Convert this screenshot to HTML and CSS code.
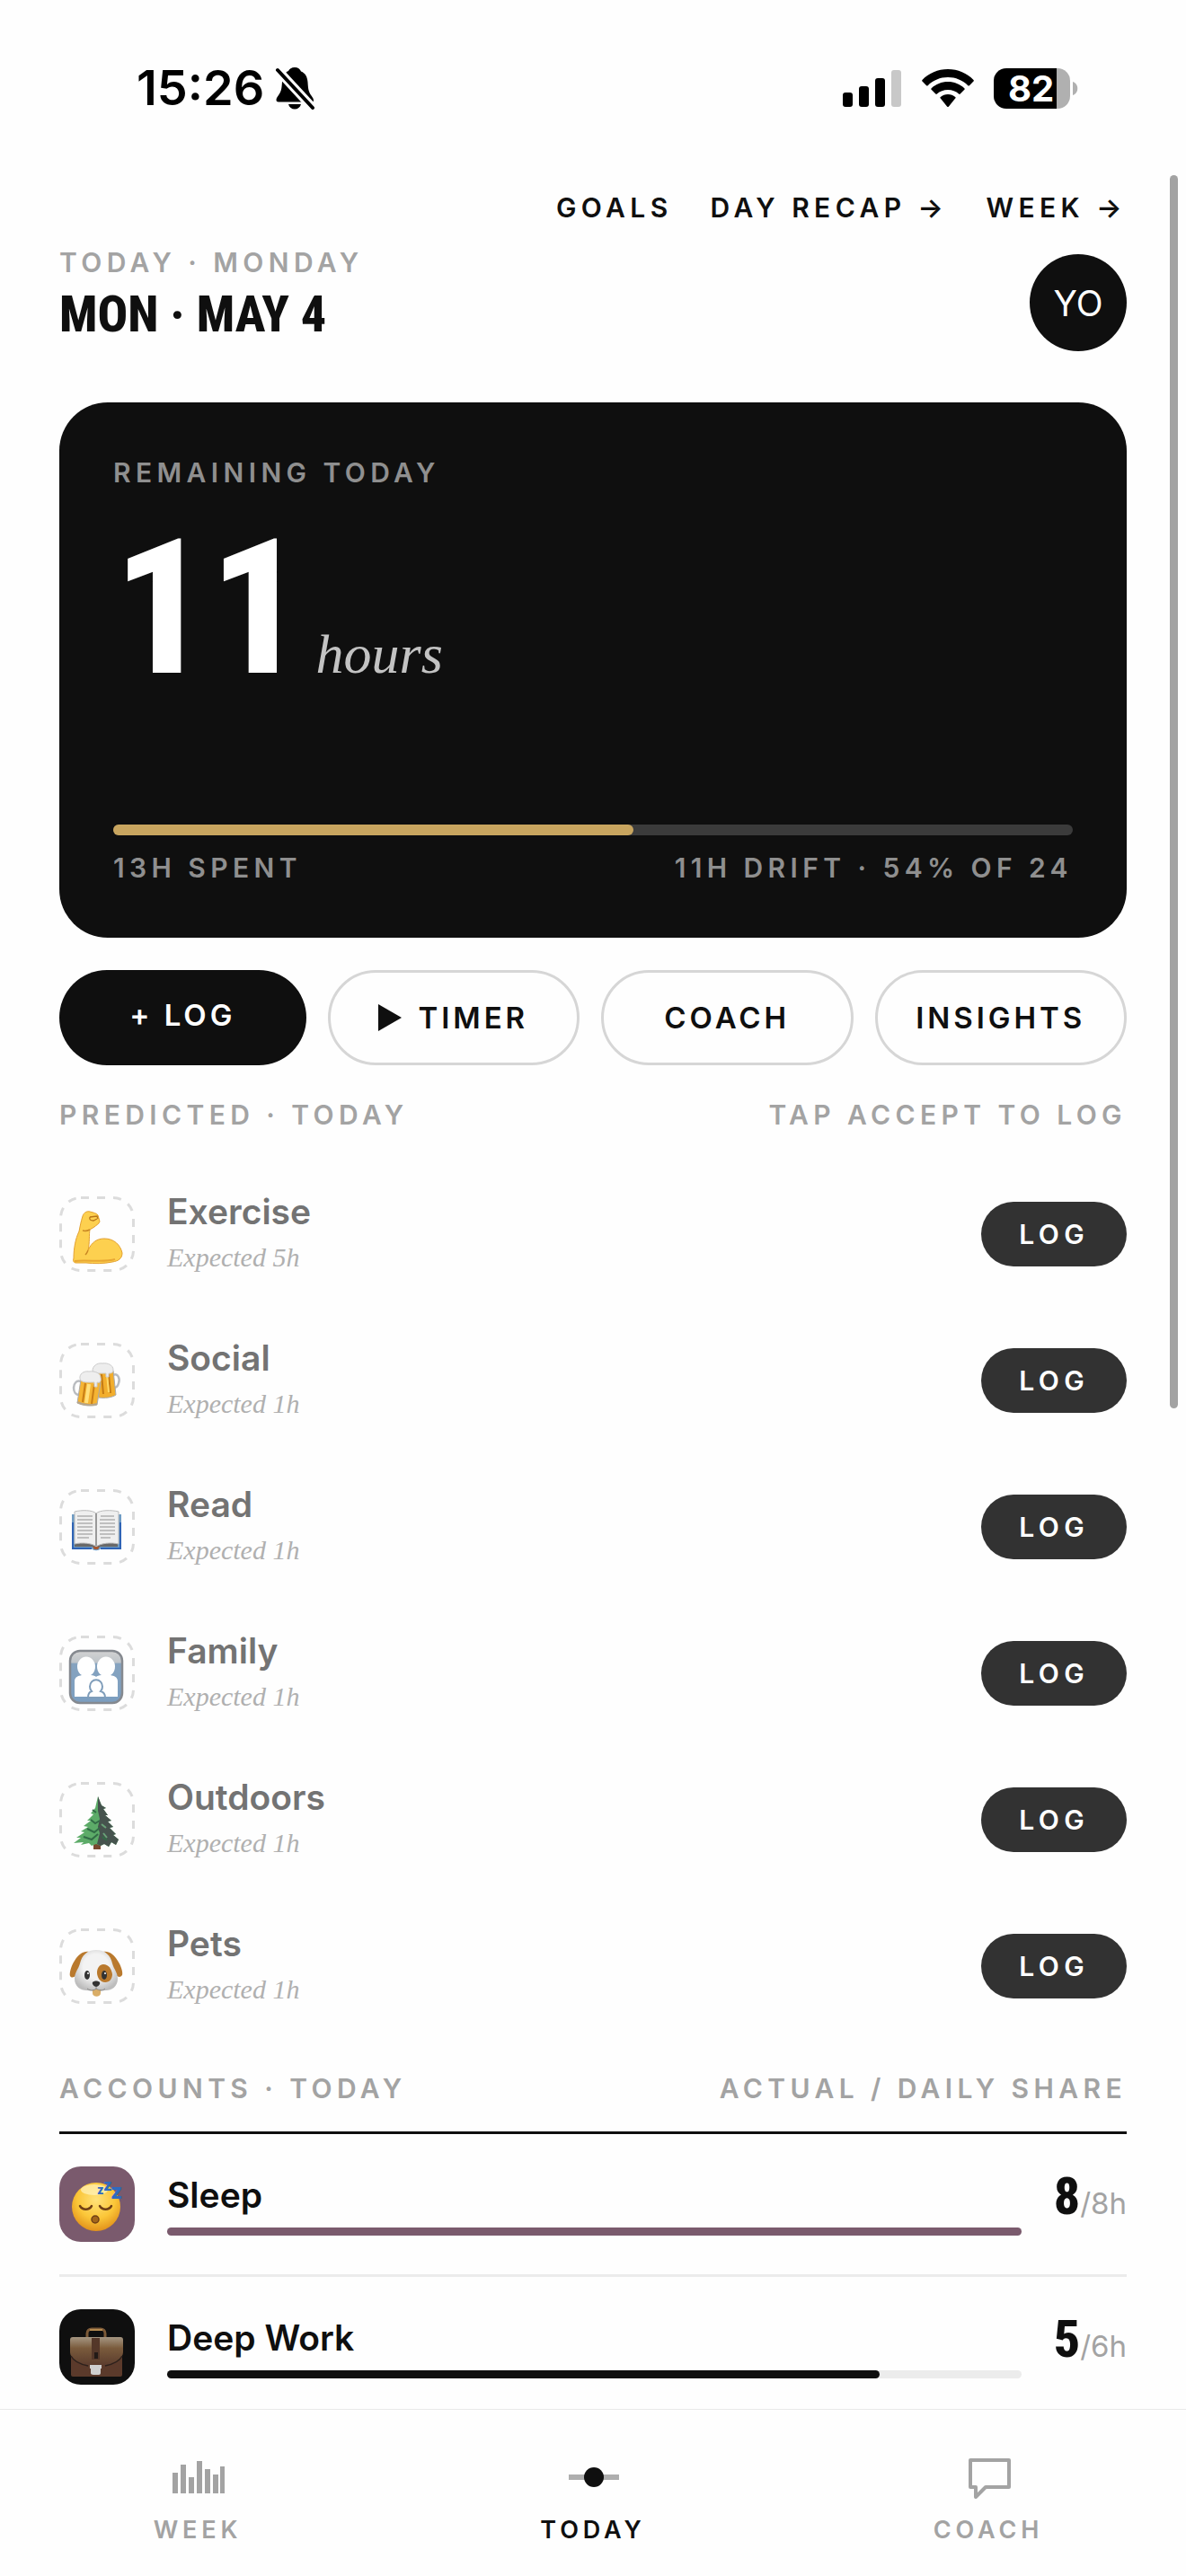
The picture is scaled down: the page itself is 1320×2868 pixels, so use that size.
FILE: index.html
```html
<!DOCTYPE html>
<html lang="en">
<head>
<meta charset="utf-8">
<meta name="viewport" content="width=device-width, initial-scale=1">
<title>Today</title>
<link rel="stylesheet" href="styles.css">
</head>
<body>
<div class="app">
  <div class="status">
    <div class="status-side">
      <span class="clock">15:26</span>
      <svg class="bell" width="44" height="48" viewBox="0 0 44 48" aria-label="Silent">
        <path d="M22 1c3.600 0 6 2 7 4.500 5 2 7 6 7.500 12 .5 8 1 11 4 15 1.500 2 2.500 3.500 2.500 5.500 0 1-.8 1.500-2 1.500H4c-1.500 0-2.500-.8-2.500-2 0-2 1-3.500 2.500-5.500 3-4 3.500-7 4-15 .5-6 2.500-10 7-12C16 3 18.400 1 22 1z"/>
        <path d="M15 42h14c-1 3.600-3.600 5.500-7 5.500s-6-1.900-7-5.500z"/>
        <path d="M3 4l39 42" stroke="#fefefe" stroke-width="10"/>
        <path d="M3 4l39 42" stroke="#000" stroke-width="4" stroke-linecap="round"/>
      </svg>
    </div>
    <div class="status-side status-right">
      <svg width="66" height="42" viewBox="0 0 66 42" aria-label="Signal">
        <rect x="0" y="26" width="11" height="16" rx="3"/><rect x="18" y="19" width="11" height="23" rx="3"/><rect x="36" y="10" width="11" height="32" rx="3"/><rect x="54" y="1" width="11" height="41" rx="3" fill="#c8c8c8"/>
      </svg>
      <svg width="58" height="42" viewBox="0 0 58 42" aria-label="Wi-Fi">
        <path d="M29 0C18 0 7.500 4.500.5 12c-.5.6-.5 1 0 1.600l4.600 4.600c.6.600 1.100.5 1.600 0C12.500 12.300 20.500 9 29 9s16.500 3.300 22.300 9.200c.5.5 1 .6 1.600 0l4.600-4.600c.5-.6.5-1 0-1.600C50.500 4.500 40 0 29 0z"/>
        <path d="M29 14c-7 0-13.500 2.700-18.300 7.200-.6.600-.6 1.100-.1 1.600l4.700 4.700c.5.500 1 .5 1.600 0C20.100 24.500 24.300 23 29 23s8.900 1.500 12.100 4.500c.6.500 1.100.5 1.600 0l4.700-4.700c.5-.5.5-1-.1-1.600C42.500 16.700 36 14 29 14z"/>
        <path d="M29 28c-3.200 0-6 1.100-8.200 3-.6.500-.5 1.100 0 1.600l7.200 8.800c.7.700 1.300.7 2 0l7.200-8.800c.5-.5.600-1.100 0-1.600-2.200-1.900-5-3-8.200-3z"/>
      </svg>
      <svg width="94" height="45" viewBox="0 0 94 45" aria-label="Battery">
        <path d="M70 0h1a14 14 0 0 1 14 14v17a14 14 0 0 1-14 14h-1z" fill="#b0b0b0"/>
        <path d="M70 0v45H14A14 14 0 0 1 0 31V14A14 14 0 0 1 14 0z"/>
        <path d="M88 15c7 2 7 13 0 15z" fill="#b0b0b0"/>
        <text x="16" y="37" class="battery-text">82</text>
      </svg>
    </div>
  </div>

  <main class="main">
    <nav class="links">
      <a href="#goals">GOALS</a>
      <a href="#recap">DAY RECAP →</a>
      <a href="#week">WEEK →</a>
    </nav>
    <header class="head">
      <div>
        <p class="label">TODAY · MONDAY</p>
        <h1 class="title">MON · MAY 4</h1>
      </div>
      <button class="avatar" type="button">YO</button>
    </header>

    <section class="card">
      <p class="label">REMAINING TODAY</p>
      <p class="total"><span class="total-num">11</span><em class="total-unit">hours</em></p>
      <div class="card-track"><div class="card-fill" style="width:54.2%"></div></div>
      <div class="split"><span class="label">13H SPENT</span><span class="label">11H DRIFT · 54% OF 24</span></div>
    </section>

    <div class="actions">
      <button class="action action-main" type="button">+ LOG</button>
      <button class="action" type="button"><svg width="26" height="30" viewBox="0 0 26 30" aria-hidden="true"><path d="M0 0l26 15L0 30z" fill="#0f0f0f"/></svg>TIMER</button>
      <button class="action" type="button">COACH</button>
      <button class="action" type="button">INSIGHTS</button>
    </div>

    <section>
      <div class="split section-head"><h2 class="label">PREDICTED · TODAY</h2><span class="label">TAP ACCEPT TO LOG</span></div>
      <ul class="list">
        <li class="row">
          <span class="tile"><svg viewBox="0 0 84 84" aria-hidden="true">
            <rect class="dash" x="1.500" y="1.500" width="81" height="81" rx="22.500"/>
            <path d="M26 22C27 18 31 16 34 17C38 18 42 19 43 21L45 28C44 31 41 32 39 34L34 37C33 42 34 52 32 60C36 51 42 47 50 47C61 47 68 54 70 63C70 69 66 72 59 73C50 75 38 75 30 74L19 74C16 74 15 72 16 69C16 58 18 47 22 39C23 34 24 28 26 22z" fill="#fdd04f" stroke="#e3a02e" stroke-width="1"/>
            <path d="M17 72C30 70 50 74 62 70" fill="none" stroke="#e8a733" stroke-width="2"/><path d="M32 60c-1 2-1 3-3 5M26 38c3 1 6 0 8-1" fill="none" stroke="#c98724" stroke-width="1.500"/><path d="M34 23l8-1 1 3M34 23c-1 3 1 4 4 4l4-2" fill="none" stroke="#b87418" stroke-width="1.300"/>
          </svg></span>
          <div class="row-body"><h3 class="name">Exercise</h3><p class="hint">Expected 5h</p></div>
          <button class="log" type="button">LOG</button>
        </li>
        <li class="row">
          <span class="tile"><svg viewBox="0 0 84 84" aria-hidden="true">
            <rect class="dash" x="1.500" y="1.500" width="81" height="81" rx="22.500"/>
            <path d="M60 36c5-3 8 4 6 9-1 4-3 5-5 5" fill="none" stroke="#b9bcc0" stroke-width="2.500"/>
            <path d="M38 32l22-1 3 27c-4 3-13 4-19 3z" fill="#f2ae2d" stroke="#aaa" stroke-width="1"/><path d="M47 35l2 22M55 35l2 21" stroke="#c47a14" stroke-width="2"/><path d="M53 35l2 20" stroke="#ffd968" stroke-width="2"/>
            <path d="M37 31c0-5 5-9 11-8 6-1 12 2 12 7 0 4-3 4-5 4v4h-3v-4H39z" fill="#ededed" stroke="#ccc" stroke-width="1"/>
            <path d="M24 43c-5-2-8 3-8 7s2 8 6 8" fill="none" stroke="#b9bcc0" stroke-width="2.500"/>
            <path d="M24 41l22 3-4 25c-6 2-16 1-22-2z" fill="#f5b433" stroke="#aaa" stroke-width="1"/><path d="M29 45l-3 21M39 46l-3 22" stroke="#c97e16" stroke-width="2"/><path d="M33 46l-3 21" stroke="#ffe07d" stroke-width="4"/><path d="M20 66c6 3 15 4 22 2" fill="none" stroke="#b5a58c" stroke-width="2"/>
            <path d="M23 40c-1-5 4-9 10-8 7-1 13 2 13 7 1 4-1 6-4 5v5h-3v-5c-6 0-15 1-16-4z" fill="#eee" stroke="#ccc" stroke-width="1"/>
          </svg></span>
          <div class="row-body"><h3 class="name">Social</h3><p class="hint">Expected 1h</p></div>
          <button class="log" type="button">LOG</button>
        </li>
        <li class="row">
          <span class="tile"><svg viewBox="0 0 84 84" aria-hidden="true">
            <rect class="dash" x="1.500" y="1.500" width="81" height="81" rx="22.500"/>
            <path d="M14 28h55v38H46c-2 3-8 3-10 0H14z" fill="#6f9cc4"/><path d="M15 37v29h21M68 37v29H46" fill="none" stroke="#2f63b5" stroke-width="2"/>
            <path d="M17 60h48v4H17z" fill="#686868"/>
            <path d="M17 25c8-2 20-2 24 2 4-4 17-4 25-2v36c-8-2-20-1-25 3-4-4-16-5-24-3z" fill="#efefef" stroke="#bbb" stroke-width="1"/>
            <path d="M41 27v36" stroke="#999" stroke-width="2"/>
            <path d="M20 30h17M20 34h17M20 38h17M20 42h17M20 46h17M20 50h17M20 54h13M46 30h15M45 34h17M45 38h17M45 42h17M45 46h17M45 50h17M46 54h11" stroke="#b0b0b0" stroke-width="1.300"/>
            <path d="M37 64h8l-2 3h-4z" fill="#a5572f"/>
          </svg></span>
          <div class="row-body"><h3 class="name">Read</h3><p class="hint">Expected 1h</p></div>
          <button class="log" type="button">LOG</button>
        </li>
        <li class="row">
          <span class="tile"><svg viewBox="0 0 84 84" aria-hidden="true">
            <defs><linearGradient id="family-sky" x2="0" y2="1"><stop offset="0" stop-color="#d2d2d2"/><stop offset=".22" stop-color="#bfc5ca"/><stop offset=".25" stop-color="#86a3bf"/><stop offset="1" stop-color="#7b9ec0"/></linearGradient></defs>
            <rect class="dash" x="1.500" y="1.500" width="81" height="81" rx="22.500"/>
            <rect x="12" y="17" width="58" height="58" rx="11" fill="url(#family-sky)" stroke="#85898f" stroke-width="2.500"/>
            <path d="M17 68V51c0-5 4-6 8-7a10 11 0 1 1 10 0c3 0 5 1 6 2 1-1 3-2 6-2a10 11 0 1 1 10 0c4 1 8 2 8 7v17z" fill="#fff"/>
            <path d="M32 69c0-4 1-6 4-7a7 7.500 0 1 1 10 0c4 1 5 3 5 7z" fill="#fff" stroke="#7f9dba" stroke-width="2"/>
          </svg></span>
          <div class="row-body"><h3 class="name">Family</h3><p class="hint">Expected 1h</p></div>
          <button class="log" type="button">LOG</button>
        </li>
        <li class="row">
          <span class="tile"><svg viewBox="0 0 84 84" aria-hidden="true">
            <rect class="dash" x="1.500" y="1.500" width="81" height="81" rx="22.500"/>
            <rect x="38" y="64" width="8" height="11" fill="#79492f"/>
            <path d="M43 16l4 10 5 3-3 1 5 7h-3l7 6-4 1 6 6-4 1 7 7-3 1 6 5-3 6-5-3-3 5-5-3-4 2-5-2-5 2-3-3-9 2 3-3-11 1 8-6-5 0 9-6-4-1 8-5-5-1 8-6-4 0 7-7-3-1 5-6z" fill="#5cab68"/>
            <path d="M43 16l4 10 5 3-3 1 5 7h-3l7 6-4 1 6 6-4 1 7 7-3 1 6 5-3 6-5-3-3 5-5-3-4 2-4-2 3-12-2-7 2-9-2-9z" fill="#46534e"/>
            <path d="M35 42l5 4 5-3M31 52l8 4 6-5M27 61l9 3 7-6M48 61l5 4M37 31l4 3" fill="none" stroke="#326c46" stroke-width="2"/><path d="M47 47l5 4M49 57l4 5" stroke="#6aa278" stroke-width="2"/>
          </svg></span>
          <div class="row-body"><h3 class="name">Outdoors</h3><p class="hint">Expected 1h</p></div>
          <button class="log" type="button">LOG</button>
        </li>
        <li class="row">
          <span class="tile"><svg viewBox="0 0 84 84" aria-hidden="true">
            <defs><radialGradient id="dog-fur" cx=".5" cy=".4" r=".6"><stop offset=".5" stop-color="#f3f3f3"/><stop offset="1" stop-color="#bdbdbd"/></radialGradient></defs>
            <rect class="dash" x="1.500" y="1.500" width="81" height="81" rx="22.500"/>
            <path d="M33 26c-6-1-12 3-16 10-4 6-6 14-5 17 2 3 5 1 7-1zM49 26c6-1 12 3 16 10 4 6 6 13 5 16-2 3-5 2-7 0z" fill="#b9792d"/>
            <path d="M41 24c10 0 16 6 18 15 2 7 6 10 6 17 0 9-7 13-13 13l-11 1-11-1c-6 0-13-4-13-13 0-7 4-10 6-17 2-9 8-15 18-15z" fill="url(#dog-fur)"/>
            <path d="M49 40c6 0 9 5 10 11 0 5-3 9-8 9-6 0-9-6-9-11s3-9 7-9z" fill="#b9792d"/>
            <path d="M37 68h9v4c0 5-9 5-9 0z" fill="#d9ad67"/>
            <ellipse cx="31" cy="52" rx="3" ry="5" fill="#333"/><ellipse cx="50" cy="52" rx="3" ry="5" fill="#333"/><circle cx="32" cy="50" r="1" fill="#fff"/><circle cx="51" cy="50" r="1" fill="#fff"/>
            <path d="M37 60c2-2 6-2 8 0 1 2-2 5-4 5s-5-3-4-5z" fill="#333"/><path d="M41 65v3M31 67c4 3 8 2 10 0 3 2 7 3 10 0" fill="none" stroke="#888" stroke-width="1"/>
          </svg></span>
          <div class="row-body"><h3 class="name">Pets</h3><p class="hint">Expected 1h</p></div>
          <button class="log" type="button">LOG</button>
        </li>
      </ul>
    </section>

    <section>
      <div class="split accounts-head"><h2 class="label">ACCOUNTS · TODAY</h2><span class="label">ACTUAL / DAILY SHARE</span></div>
      <ul class="list">
        <li class="account account-sleep">
          <span class="tile"><svg viewBox="0 0 84 84" aria-hidden="true">
            <defs><radialGradient id="face" cx=".5" cy=".35" r=".65"><stop offset="0" stop-color="#ffe27a"/><stop offset=".6" stop-color="#fbc638"/><stop offset="1" stop-color="#e2921b"/></radialGradient></defs>
            <circle cx="41" cy="45" r="27" fill="url(#face)"/><ellipse cx="39" cy="26" rx="15" ry="6" fill="#fff3bd" opacity=".7"/>
            <path d="M23 44c3 5 10 5 13 0M45 44c3 5 10 5 13 0" fill="none" stroke="#704015" stroke-width="2.500" stroke-linecap="round"/>
            <ellipse cx="40" cy="59" rx="4" ry="4" fill="#a3661b" stroke="#704015" stroke-width="1.500"/>
            <g class="snore"><text x="42" y="31" font-size="13">z</text><text x="49" y="27" font-size="17">z</text><text x="57" y="36" font-size="23">z</text></g>
          </svg></span>
          <div class="account-body"><h3 class="name">Sleep</h3><div class="track"><div class="fill" style="width:100%"></div></div></div>
          <p class="value"><strong>8</strong><span>/8h</span></p>
        </li>
        <li class="account account-work">
          <span class="tile"><svg viewBox="0 0 84 84" aria-hidden="true">
            <defs><linearGradient id="leather" x2="0" y2="1"><stop offset="0" stop-color="#a59682"/><stop offset=".4" stop-color="#7a5b3c"/><stop offset="1" stop-color="#5c3d2e"/></linearGradient></defs>
            <path d="M31 31v-4c0-3 2-5 5-5h10c3 0 5 2 5 5v4" fill="none" stroke="#7c5a38" stroke-width="3"/><path d="M34 23h14" stroke="#b58a50" stroke-width="2"/>
            <rect x="13" y="45" width="57" height="30" rx="2" fill="#5b3a2b"/>
            <path d="M15 31h53c2 0 3 1 3 3v14c0 6-8 12-19 14H31C20 60 12 54 12 48V34c0-2 1-3 3-3z" fill="url(#leather)"/>
            <path d="M13 52c3 6 9 9 19 11M70 52c-3 6-9 9-19 11" fill="none" stroke="#2d211c" stroke-width="1.500"/>
            <rect x="36" y="32" width="9" height="24" fill="#543729"/><rect x="39" y="48" width="4" height="7" fill="#221a17"/>
            <path d="M34 62h13v4h-1v5c0 2-2 2-3 2h-5c-2 0-3-1-3-2v-5h-1z" fill="#cfcfcf"/>
          </svg></span>
          <div class="account-body"><h3 class="name">Deep Work</h3><div class="track"><div class="fill" style="width:83.4%"></div></div></div>
          <p class="value"><strong>5</strong><span>/6h</span></p>
        </li>
      </ul>
    </section>
    <div class="scroll-thumb"></div>
  </main>

  <nav class="tabs">
    <a class="tab" href="#week"><svg width="60" height="48" viewBox="0 0 60 48" aria-hidden="true"><path d="M2 19h6v23H2zM11 10h6v32h-6zM20 24h6v18h-6zM29 6h6v36h-6zM38 15h6v27h-6zM47 21h6v21h-6zM55 12h5v30h-5z" fill="#a3a3a3"/></svg>WEEK</a>
    <a class="tab tab-current" href="#today" aria-current="page"><svg width="60" height="48" viewBox="0 0 60 48" aria-hidden="true"><path d="M3 21h56v6H3z" fill="#aeaeae"/><circle cx="31" cy="24" r="11" fill="#0f0f0f"/></svg>TODAY</a>
    <a class="tab" href="#coach"><svg width="60" height="48" viewBox="0 0 60 48" aria-hidden="true"><path d="M10 5h43v30H27L16 46V35h-6z" fill="none" stroke="#a3a3a3" stroke-width="4" stroke-linejoin="round"/></svg>COACH</a>
  </nav>
</div>
</body>
</html>
```

FILE: styles.css
```css
* { box-sizing: border-box; }
body, p, h1, h2, h3, ul { margin: 0; padding: 0; }
body {
  background: #fefefe;
  color: #0f0f0f;
  font-family: Inter, "Liberation Sans", sans-serif;
}
button { font: inherit; border: 0; margin: 0; padding: 0; cursor: pointer; }
a { color: inherit; text-decoration: none; }
svg { display: block; flex: none; }

.app { display: flex; flex-direction: column; height: 100vh; overflow: hidden; }

/* Status bar */
.status {
  flex: none;
  display: flex;
  justify-content: space-between;
  align-items: center;
  padding: 66px 120px 56px 152px;
}
.status-side { display: flex; align-items: center; gap: 12px; }
.status-right { gap: 22px; }
.clock { font-size: 54px; line-height: 64px; font-weight: 600; color: #000; }
.battery-text { font-size: 40px; font-weight: 700; fill: #fff; }

/* Scrolling content */
.main {
  flex: 1;
  min-height: 0;
  position: relative;
  overflow: hidden;
  padding: 27px 66px 0;
}
.scroll-thumb {
  position: absolute;
  top: 9px;
  right: 9px;
  width: 9px;
  height: 55%;
  border-radius: 5px;
  background: #a3a3a3;
}
.label, .links, .log, .tab { font-weight: 600; letter-spacing: 0.18em; }
.label { font-size: 30px; line-height: 36px; color: #a3a3a3; }
.split { display: flex; justify-content: space-between; }

.links {
  display: flex;
  justify-content: flex-end;
  gap: 42px;
  font-size: 30px;
  line-height: 36px;
}
.head { display: flex; justify-content: space-between; align-items: flex-end; margin-top: 25px; }
.title, .total-num, .value strong {
  font-family: "Roboto Condensed", "Liberation Sans Narrow", "Liberation Sans", sans-serif;
  font-weight: 800;
}
.title { font-size: 56px; line-height: 81px; }
.avatar {
  width: 108px;
  height: 108px;
  border-radius: 50%;
  background: #0f0f0f;
  color: #fff;
  font-size: 39px;
}

/* Balance card */
.card { margin-top: 57px; padding: 60px; border-radius: 54px; background: #0f0f0f; }
.card .label { color: #8f8f8f; }
.total { display: flex; align-items: baseline; gap: 12px; height: 374px; }
.total-num { font-size: 210px; line-height: 266px; color: #fff; }
.total-unit { font-family: "Liberation Serif", serif; font-size: 62px; color: #c3c3c3; }
.card-track { height: 12px; margin-bottom: 18px; border-radius: 6px; background: #3b3b3b; }
.card-fill { height: 100%; border-radius: 6px; background: #c8a55f; }

/* Quick actions */
.actions { display: flex; gap: 24px; margin-top: 36px; }
.action {
  flex: 1;
  display: flex;
  justify-content: center;
  align-items: center;
  gap: 18px;
  padding: 30px 20px;
  border: 3px solid #d6d6d6;
  border-radius: 53px;
  background: #fefefe;
  color: #0f0f0f;
  font-size: 33px;
  line-height: 40px;
  font-weight: 600;
  letter-spacing: 0.12em;
}
.action-main { align-items: flex-start; border: 0; background: #0f0f0f; color: #fff; }

/* Predicted list */
.section-head { margin: 37px 0 33px; }
.list { list-style: none; }
.row { display: flex; align-items: center; gap: 36px; padding: 30px 0; }
.row-body { flex: 1; }
.tile { flex: none; width: 84px; height: 84px; border-radius: 24px; }
.dash { fill: none; stroke: #dcdcdc; stroke-width: 3px; stroke-dasharray: 9 9; }
.name { font-size: 39px; font-weight: 600; line-height: 48px; }
.row .name { color: #737373; line-height: 53px; }
.hint { font: italic 30px/50px "Liberation Serif", serif; color: #b0b0b0; }
.log {
  padding: 18px 42px;
  border-radius: 36px;
  background: #323232;
  color: #fff;
  font-size: 30px;
  line-height: 36px;
}

/* Accounts */
.accounts-head { margin-top: 37px; padding-bottom: 30px; border-bottom: 3px solid #0f0f0f; }
.account {
  display: flex;
  align-items: center;
  gap: 36px;
  padding: 36px 0;
  border-bottom: 3px solid #ececec;
}
.account-body { flex: 1; }
.track { height: 9px; margin-top: 12px; border-radius: 5px; background: #ececec; }
.fill { height: 100%; border-radius: 5px; }
.account-sleep .tile, .account-sleep .fill { background: #7a5a6d; }
.account-work .tile, .account-work .fill { background: #0f0f0f; }
.value { display: flex; align-items: baseline; margin-bottom: 18px; }
.value strong { font-size: 58px; line-height: 62px; }
.value span { font-size: 33px; color: #a3a3a3; }
.snore { fill: #2f6abf; font-weight: 800; }

/* Tab bar */
.tabs {
  flex: none;
  display: grid;
  grid-template-columns: repeat(3, 1fr);
  padding: 51px 0 35px;
  border-top: 1px solid #e9e9e9;
  background: #fefefe;
}
.tab {
  display: flex;
  flex-direction: column;
  align-items: center;
  gap: 19px;
  font-size: 27px;
  line-height: 32px;
  color: #a3a3a3;
}
.tab-current { color: #0f0f0f; }
```
